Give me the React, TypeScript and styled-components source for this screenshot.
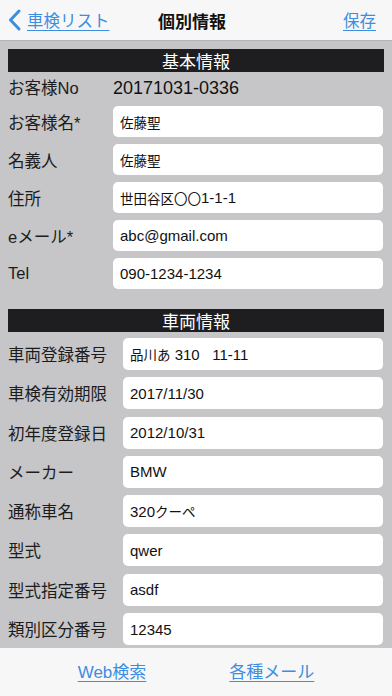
import React from "react";
import styled, { createGlobalStyle } from "styled-components";

const Global = createGlobalStyle`
  html, body { margin: 0; padding: 0; }
  body {
    font-family: "Liberation Sans", "Noto Sans CJK JP", sans-serif;
    background: #c6c6c8;
  }
`;

const Screen = styled.div`
  width: 392px;
  height: 696px;
  display: flex;
  flex-direction: column;
  overflow: hidden;
  background: #c6c6c8;
`;

const NavBar = styled.header`
  height: 40px;
  flex: none;
  background: #f7f7f7;
  border-bottom: 1px solid #b4b4b6;
  display: grid;
  grid-template-columns: 1fr auto 1fr;
  align-items: center;
  padding: 0 16px 0 8px;
`;

const BackLink = styled.a`
  display: flex;
  align-items: center;
  gap: 6px;
  color: #3d8ee0;
  font-size: 16.5px;
  justify-self: start;
  span { text-decoration: underline; text-underline-offset: 3px; }
`;

const Title = styled.h1`
  margin: 0;
  font-size: 17px;
  font-weight: 700;
  color: #111;
`;

const NavAction = styled.a`
  justify-self: end;
  color: #3d8ee0;
  font-size: 16.5px;
  text-decoration: underline;
  text-underline-offset: 3px;
`;

const Content = styled.main`
  flex: 1;
  overflow: hidden;
  padding: 8px 8px 0 8px;
  display: flex;
  flex-direction: column;
`;

const SectionHeader = styled.div<{ $top?: number }>`
  height: 23px;
  margin-top: ${(p) => p.$top ?? 0}px;
  background: #1e1e20;
  color: #fff;
  font-size: 17px;
  display: flex;
  align-items: center;
  justify-content: center;
`;

const Fields = styled.div<{ $gap: number; $pad: number }>`
  display: flex;
  flex-direction: column;
  gap: ${(p) => p.$gap}px;
  padding-top: ${(p) => p.$pad}px;
`;

const Row = styled.div<{ $label: number; $h: number }>`
  display: grid;
  grid-template-columns: ${(p) => p.$label}px 1fr;
  align-items: center;
  height: ${(p) => p.$h}px;
  margin-right: 1px;
`;

const StaticRow = styled.div`
  display: grid;
  grid-template-columns: 105px 1fr;
  align-items: end;
  height: 27px;
`;

const Label = styled.span`
  font-size: 16.5px;
  color: #1c1c1c;
  white-space: nowrap;
`;

const StaticValue = styled.span`
  font-size: 18px;
  color: #111;
`;

const Input = styled.div`
  height: 100%;
  background: #fff;
  border-radius: 5px;
  display: flex;
  align-items: center;
  padding: 0 7px;
  font-size: 15px;
  color: #111;
  white-space: pre;
`;

const Small = styled.span`
  font-size: 13.5px;
`;

const Toolbar = styled.footer`
  height: 48px;
  flex: none;
  background: #f7f7f7;
  display: flex;
  justify-content: center;
  align-items: center;
  gap: 83px;
  padding-bottom: 4px;
  box-sizing: border-box;
`;

const ToolLink = styled.a`
  color: #3d8ee0;
  font-size: 17px;
  text-decoration: underline;
  text-underline-offset: 3px;
`;

const Chevron = () => (
  <svg width="13" height="22" viewBox="0 0 13 22" fill="none">
    <polyline points="11,2 2.5,11 11,20" stroke="#3d8ee0" strokeWidth="3" strokeLinecap="round" strokeLinejoin="round" />
  </svg>
);

const basic: [string, React.ReactNode][] = [
  ["お客様名*", <Small>佐藤聖</Small>],
  ["名義人", <Small>佐藤聖</Small>],
  ["住所", <><Small>世田谷区〇〇</Small>1-1-1</>],
  ["eメール*", "abc@gmail.com"],
  ["Tel", "090-1234-1234"],
];

const vehicle: [string, React.ReactNode][] = [
  ["車両登録番号", <><Small>品川あ</Small> 310   11-11</>],
  ["車検有効期限", "2017/11/30"],
  ["初年度登録日", "2012/10/31"],
  ["メーカー", "BMW"],
  ["通称車名", <>320<Small>クーペ</Small></>],
  ["型式", "qwer"],
  ["型式指定番号", "asdf"],
  ["類別区分番号", "12345"],
];

export default function App() {
  return (
    <Screen>
      <Global />
      <NavBar>
        <BackLink>
          <Chevron />
          <span>車検リスト</span>
        </BackLink>
        <Title>個別情報</Title>
        <NavAction>保存</NavAction>
      </NavBar>
      <Content>
        <SectionHeader>基本情報</SectionHeader>
        <Fields $gap={7} $pad={0}>
          <StaticRow>
            <Label>お客様No</Label>
            <StaticValue>20171031-0336</StaticValue>
          </StaticRow>
          {basic.map(([l, v]) => (
            <Row key={l} $label={105} $h={31}>
              <Label>{l}</Label>
              <Input>{v}</Input>
            </Row>
          ))}
        </Fields>
        <SectionHeader $top={20}>車両情報</SectionHeader>
        <Fields $gap={7.3} $pad={6}>
          {vehicle.map(([l, v]) => (
            <Row key={l} $label={115} $h={32}>
              <Label>{l}</Label>
              <Input>{v}</Input>
            </Row>
          ))}
        </Fields>
      </Content>
      <Toolbar>
        <ToolLink>Web検索</ToolLink>
        <ToolLink>各種メール</ToolLink>
      </Toolbar>
    </Screen>
  );
}
